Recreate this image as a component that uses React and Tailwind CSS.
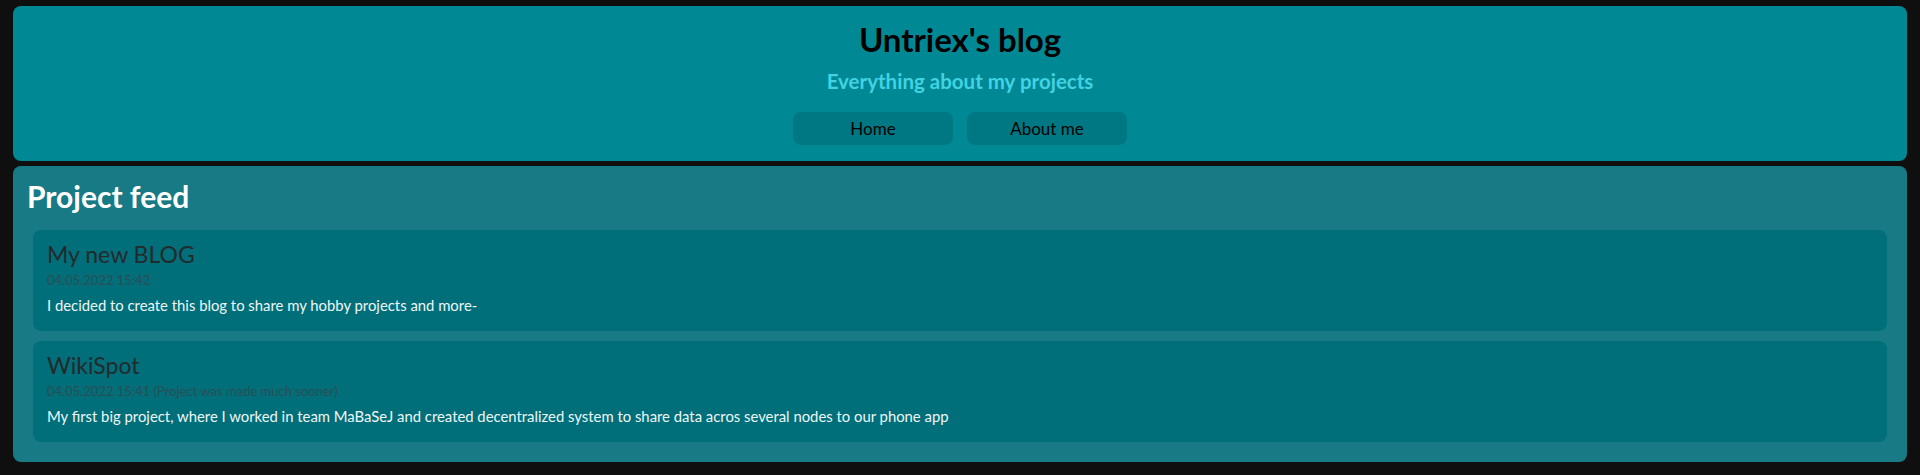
import React from 'react';

const posts = [
  {
    title: 'My new BLOG',
    date: '04.05.2022 15:42',
    text: 'I decided to create this blog to share my hobby projects and more-',
  },
  {
    title: 'WikiSpot',
    date: '04.05.2022 15:41 (Project was made much sooner)',
    text: 'My first big project, where I worked in team MaBaSeJ and created decentralized system to share data acros several nodes to our phone app',
  },
];

export default function App() {
  return (
    <div
      className="min-h-[475px] bg-[#0f0f0f] px-[13px] pt-[6px] pb-[13px] flex flex-col gap-[5px]"
      style={{ fontFamily: 'Lato, "Noto Sans", sans-serif' }}
    >
      {/* Header */}
      <header className="bg-[#018895] rounded-[8px] flex flex-col items-center pt-[14px] pb-[16px]">
        <h1 className="text-[33px] leading-[39px] font-bold text-black">Untriex's blog</h1>
        <h2 className="mt-[10px] text-[20.5px] leading-[25px] font-bold text-[#42d3e3]">Everything about my projects</h2>
        <nav className="mt-[18px] flex gap-[14px]">
          <button className="w-[160px] h-[33px] rounded-[8px] bg-[#007884] text-[17px] text-black">Home</button>
          <button className="w-[160px] h-[33px] rounded-[8px] bg-[#007884] text-[17px] text-black">About me</button>
        </nav>
      </header>

      {/* Feed */}
      <main className="bg-[#177a85] rounded-[8px] pt-[12px] pb-[20px]">
        <h2 className="px-[14px] text-[30px] leading-[36px] font-bold text-white">Project feed</h2>
        <div className="mt-[16px] px-[20px] flex flex-col gap-[10px]">
          {posts.map((p) => (
            <article key={p.title} className="bg-[#006f7a] rounded-[8px] h-[101px] px-[14px] pt-[11px]">
              <h3 className="text-[23px] leading-[27px] text-[#222a2c]">{p.title}</h3>
              <div className="mt-[4px] text-[13px] leading-[16px] text-[#2b4e54]">{p.date}</div>
              <p className="mt-[8px] text-[14.85px] leading-[18px] text-[#eef6f7]">{p.text}</p>
            </article>
          ))}
        </div>
      </main>
    </div>
  );
}
